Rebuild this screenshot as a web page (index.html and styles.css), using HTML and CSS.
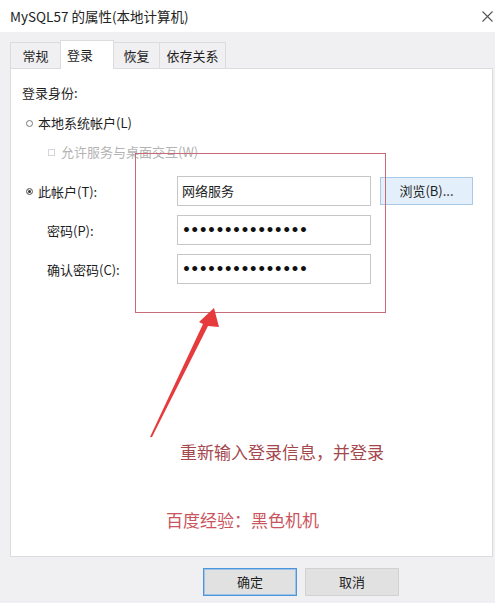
FILE: index.html
```html
<!DOCTYPE html>
<html lang="zh-CN">
<head>
<meta charset="UTF-8">
<title>MySQL57 的属性(本地计算机)</title>
<link rel="stylesheet" href="styles.css">
</head>
<body>

<div class="titlebar">
  <span class="title">MySQL57 的属性(本地计算机)</span>
  <svg class="close" width="11" height="11" viewBox="0 0 11 11">
    <path d="M0.5 0.5 L10.5 10.5 M10.5 0.5 L0.5 10.5" stroke="#555" stroke-width="1.1" fill="none"/>
  </svg>
</div>

<div class="tabs">
  <div class="tab t1">常规</div>
  <div class="tab t2 active">登录</div>
  <div class="tab t3">恢复</div>
  <div class="tab t4">依存关系</div>
</div>

<div class="panel">
  <div class="caption">登录身份:</div>

  <div class="radio-row">
    <span class="radio"></span>本地系统帐户(L)
  </div>

  <div class="check-row">
    <span class="check"></span>允许服务与桌面交互(W)
  </div>

  <div class="field-row first">
    <div class="label"><span class="radio on"></span>此帐户(T):</div>
    <div class="input">网络服务</div>
    <div class="browse">浏览(B)...</div>
  </div>

  <div class="field-row">
    <div class="label indent">密码(P):</div>
    <div class="input dots">•••••••••••••••</div>
  </div>

  <div class="field-row">
    <div class="label indent">确认密码(C):</div>
    <div class="input dots">•••••••••••••••</div>
  </div>

  <div class="note one">重新输入登录信息，并登录</div>
  <div class="note two">百度经验：黑色机机</div>
</div>

<div class="footer">
  <div class="btn ok">确定</div>
  <div class="btn">取消</div>
</div>

<!-- annotation drawn over the dialog -->
<svg class="marks" width="495" height="603" viewBox="0 0 495 603">
  <rect x="135.5" y="153.5" width="250" height="159" fill="none" stroke="#c76b78" stroke-width="1"/>
  <polygon points="150,437 203,324 199,322 214,308 219,327 208,326 152,437" fill="#e63b3c"/>
</svg>

</body>
</html>
```

FILE: styles.css
```css
* {
  box-sizing: border-box;
}

body {
  margin: 0;
  width: 495px;
  height: 603px;
  overflow: hidden;
  position: relative;
  font-family: "Noto Sans CJK SC", "Noto Sans", sans-serif;
  font-size: 13px;
  color: #1e1e1e;
  background-color: #f0eff1;
}

/* Title bar */
.titlebar {
  height: 32px;
  background-color: white;
  display: flex;
  align-items: center;
  justify-content: space-between;
  padding: 0 2px 0 10px;
}

.title {
  font-size: 13.5px;
  color: #222;
}

/* Tabs */
.tabs {
  display: flex;
  align-items: flex-end;
  height: 36px;
  margin-left: 10px;
}

.tab {
  height: 26px;
  line-height: 25px;
  text-align: center;
  border: 1px solid #dcdcdc;
  border-bottom: none;
  margin-left: -1px;
  background-color: #f0eff1;
}

.tab.t1 { width: 51px; margin-left: 0; }
.tab.t2 { width: 54px; }
.tab.t3 { width: 47px; }
.tab.t4 { width: 67px; }

.tab.active {
  height: 29px;
  line-height: 27px;
  background-color: white;
  position: relative;
  z-index: 1;
  margin-bottom: -1px;
  text-align: left;
  padding-left: 6px;
}

/* Tab page */
.panel {
  height: 489px;
  margin: 0 2px 0 10px;
  background-color: white;
  border: 1px solid #dcdcdc;
  padding-left: 11px;
  padding-top: 14px;
}

.caption {
  line-height: 20px;
}

.radio-row {
  margin-top: 10px;
  line-height: 20px;
  display: flex;
  align-items: center;
  padding-left: 4px;
}

.radio {
  width: 7px;
  height: 7px;
  border: 1px solid #777;
  border-radius: 50%;
  margin-right: 5px;
  display: inline-block;
}

.radio.on {
  background-color: #333;
  box-shadow: inset 0 0 0 1px white;
}

.check-row {
  margin-top: 9px;
  line-height: 20px;
  display: flex;
  align-items: center;
  padding-left: 26px;
  color: #b4b4b4;
}

.check {
  width: 7px;
  height: 7px;
  border: 1px solid #d6d6d6;
  margin-right: 6px;
}

.field-row {
  margin-top: 9px;
  height: 30px;
  display: flex;
  align-items: center;
}

.field-row.first {
  margin-top: 14px;
}

.label {
  width: 155px;
  display: flex;
  align-items: center;
  padding-left: 4px;
}

.label.indent {
  padding-left: 25px;
}

.input {
  width: 194px;
  height: 30px;
  border: 1px solid #c6c6c6;
  padding-left: 4px;
  line-height: 28px;
}

.input.dots {
  font-family: "DejaVu Sans", sans-serif;
  font-size: 14px;
  font-weight: bold;
  letter-spacing: -0.6px;
  color: #111;
}

.browse {
  width: 93px;
  height: 28px;
  margin-left: 9px;
  line-height: 26px;
  text-align: center;
  background-color: #e3effa;
  border: 1px solid #a9c9e6;
}

/* Red notes */
.note {
  font-size: 17px;
  line-height: 24px;
}

.note.one {
  margin-top: 156px;
  padding-left: 158px;
  color: #a4484e;
}

.note.two {
  margin-top: 44px;
  padding-left: 144px;
  color: #c9545d;
}

/* Bottom buttons */
.footer {
  display: flex;
  padding: 11px 0 0 203px;
  gap: 8px;
}

.btn {
  width: 94px;
  height: 28px;
  line-height: 26px;
  text-align: center;
  background-color: #e1e1e1;
  border: 1px solid #d2d2d2;
}

.btn.ok {
  border: 1px solid #4f95d9;
  box-shadow: inset 0 0 0 1px #9cc3ea;
}

.marks {
  position: absolute;
  top: 0;
  left: 0;
  pointer-events: none;
}
```
